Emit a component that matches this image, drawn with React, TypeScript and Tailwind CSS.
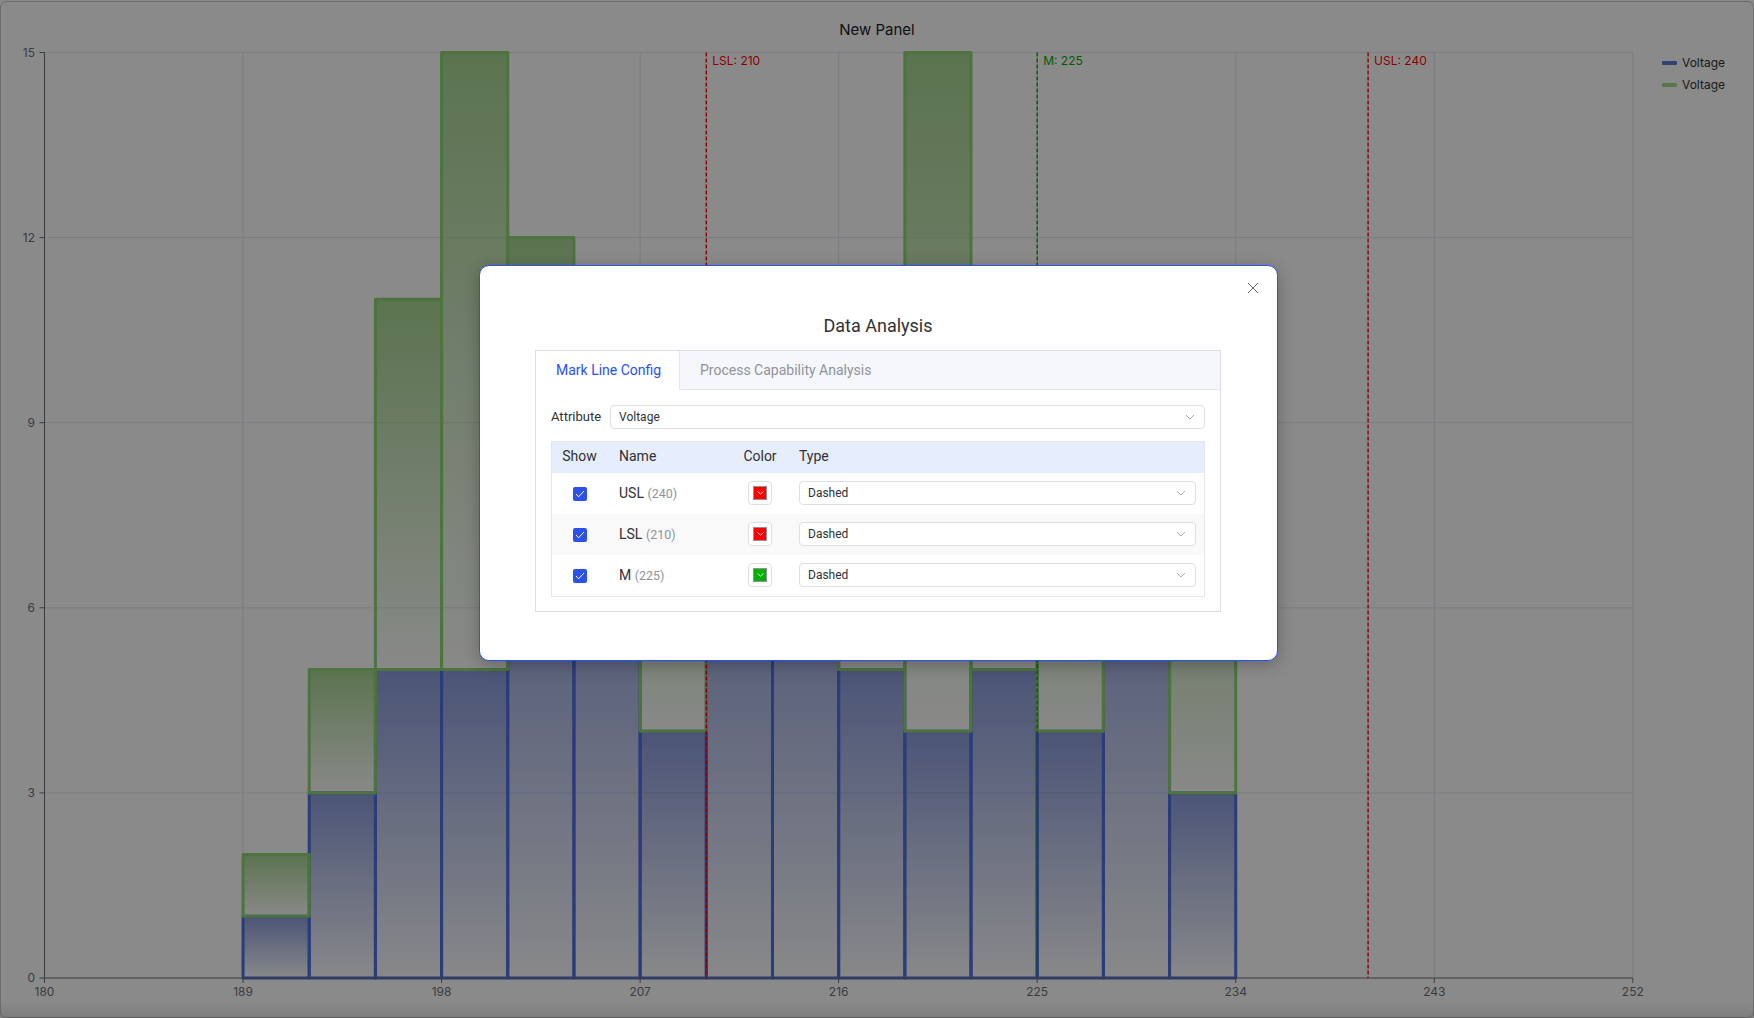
const X0 = 44.5
const XPER = 22.06
const Y0 = 978
const YPER = 61.7
const xAt = (v: number) => X0 + (v - 180) * XPER
const yAt = (v: number) => Y0 - v * YPER

// [blue, stacked total] per 3-wide bin starting at 189
const bins = [
  [1, 2], [3, 5], [5, 11], [5, 15], [7, 12], [7, 9], [4, 8], [7, 9],
  [7, 9], [5, 8], [4, 15], [5, 8], [4, 8], [7, 9], [3, 8],
]

const marks = [
  { v: 210, label: 'LSL: 210', color: '#ff0000' },
  { v: 225, label: 'M: 225', color: '#00aa00' },
  { v: 240, label: 'USL: 240', color: '#ff0000' },
]

function Chart() {
  return (
    <svg width="1754" height="1018" className="block" style={{ fontFamily: 'Inter, sans-serif' }}>
      <defs>
        <linearGradient id="blueFill" x1="0" y1="0" x2="0" y2="1">
          <stop offset="0%" stopColor="#556ecb" stopOpacity="0.68" />
          <stop offset="100%" stopColor="#556ecb" stopOpacity="0.02" />
        </linearGradient>
        <linearGradient id="greenFill" x1="0" y1="0" x2="0" y2="1">
          <stop offset="0%" stopColor="#87c669" stopOpacity="0.72" />
          <stop offset="100%" stopColor="#87c669" stopOpacity="0.02" />
        </linearGradient>
      </defs>

      <text x="877" y="35" textAnchor="middle" fontSize="15" fill="#222">New Panel</text>

      {[3, 6, 9, 12, 15].map(v => (
        <line key={v} x1={X0} x2={xAt(252)} y1={yAt(v)} y2={yAt(v)} stroke="#e0e6f1" />
      ))}
      {[189, 198, 207, 216, 225, 234, 243, 252].map(v => (
        <line key={v} x1={xAt(v)} x2={xAt(v)} y1={yAt(15)} y2={Y0} stroke="#e0e6f1" />
      ))}

      {bins.map(([blue], i) => (
        <rect key={i} x={xAt(189 + i * 3)} y={yAt(blue)} width={3 * XPER} height={blue * YPER}
          fill="url(#blueFill)" stroke="#506fe2" strokeWidth="3" strokeLinejoin="round" />
      ))}
      {bins.map(([blue, total], i) => (
        <rect key={i} x={xAt(189 + i * 3)} y={yAt(total)} width={3 * XPER} height={(total - blue) * YPER}
          fill="url(#greenFill)" stroke="#8fd474" strokeWidth="3" strokeLinejoin="round" />
      ))}

      {marks.map(m => (
        <g key={m.v}>
          <line x1={xAt(m.v)} x2={xAt(m.v)} y1={yAt(15)} y2={Y0} stroke={m.color} strokeWidth="1.4" strokeDasharray="4 2" />
          <text x={xAt(m.v) + 6} y={65} fontSize="12" fill={m.color}>{m.label}</text>
        </g>
      ))}

      <line x1={X0} x2={X0} y1={yAt(15)} y2={Y0} stroke="#6e7079" />
      <line x1={X0} x2={xAt(252)} y1={Y0} y2={Y0} stroke="#6e7079" />
      {[0, 3, 6, 9, 12, 15].map(v => (
        <g key={v}>
          <line x1={X0 - 5} x2={X0} y1={yAt(v)} y2={yAt(v)} stroke="#6e7079" />
          <text x={35} y={yAt(v) + 4} textAnchor="end" fontSize="12" fill="#6e7079">{v}</text>
        </g>
      ))}
      {[180, 189, 198, 207, 216, 225, 234, 243, 252].map(v => (
        <g key={v}>
          <line x1={xAt(v)} x2={xAt(v)} y1={Y0} y2={Y0 + 5} stroke="#6e7079" />
          <text x={xAt(v)} y={996} textAnchor="middle" fontSize="12" fill="#6e7079">{v}</text>
        </g>
      ))}

      <rect x="1662" y="61" width="15" height="4" rx="1" fill="#5f7bd6" />
      <text x="1682" y="67" fontSize="12" fill="#333">Voltage</text>
      <rect x="1662" y="83" width="15" height="4" rx="1" fill="#a2df88" />
      <text x="1682" y="89" fontSize="12" fill="#333">Voltage</text>
    </svg>
  )
}

function Chevron() {
  return (
    <svg width="10" height="6" viewBox="0 0 10 6" fill="none" stroke="#a8abb2" strokeWidth="1">
      <path d="M1 1l4 4 4-4" />
    </svg>
  )
}

function Select({ value }: { value: string }) {
  return (
    <div className="flex h-6 items-center justify-between rounded border border-[#dcdfe6] bg-white pl-2 pr-[9px] text-xs text-[#303133]">
      <span>{value}</span>
      <Chevron />
    </div>
  )
}

function Row({ name, val, color, striped }: { name: string; val: number; color: string; striped?: boolean }) {
  return (
    <div className={`grid h-[41px] grid-cols-[55px_125px_56px_1fr] items-center ${striped ? 'bg-[#f9f9f9]' : 'bg-white'}`}>
      <div className="flex justify-center">
        <span className="flex h-3.5 w-3.5 items-center justify-center rounded-[2px] bg-[#2b50ed]">
          <svg width="10" height="8" viewBox="0 0 10 8" fill="none" stroke="#fff" strokeWidth="1">
            <path d="M1 4l2.6 2.8L9 1" />
          </svg>
        </span>
      </div>
      <div className="-mt-px pl-3 text-sm text-[#303133]">
        {name} <span className="text-[12.5px] text-[#909399]">({val})</span>
      </div>
      <div className="-mt-px flex justify-center">
        <span className="flex h-6 w-6 items-center justify-center rounded border border-[#dcdfe6] bg-white">
          <span className="flex h-3.5 w-3.5 items-center justify-center border border-[#909399]" style={{ backgroundColor: color }}>
            <svg width="7" height="4" viewBox="0 0 7 4" fill="none" stroke="#fff" strokeWidth="0.8">
              <path d="M.5.5l3 2.6 3-2.6" />
            </svg>
          </span>
        </span>
      </div>
      <div className="-mt-px pl-[11px] pr-2">
        <Select value="Dashed" />
      </div>
    </div>
  )
}

export default function App() {
  return (
    <div className="relative h-[1018px] w-full overflow-hidden bg-white" style={{ fontFamily: 'Roboto, sans-serif' }}>
      <Chart />
      {/* panel frame + bottom shade of the page behind the mask */}
      <div className="pointer-events-none absolute inset-x-0 bottom-0 top-px rounded-md border border-[#c8c8c8]" />
      <div className="pointer-events-none absolute inset-x-0 bottom-0 h-4 bg-gradient-to-b from-transparent to-black/10" />
      <div className="absolute inset-0 flex justify-center bg-black/[.46] pl-0.5 pt-[265px]">
        <div className="relative h-[396px] w-[799px] rounded-[10px] border border-[#2b50ed] bg-white shadow-[0_4px_16px_rgba(0,0,0,0.25)]">
          <button className="absolute right-[18px] top-4 text-[#666]">
            <svg width="12" height="12" viewBox="0 0 12 12" fill="none" stroke="currentColor" strokeWidth="1" className="block">
              <path d="M1 1l10 10M11 1L1 11" />
            </svg>
          </button>
          <h2 className="pt-[46px] text-center text-lg leading-7 text-[#303133]">Data Analysis</h2>
          <div className="mx-[55.5px] mt-2.5 h-[262px] border border-[#dcdfe6]">
            <div className="flex h-[39px] border-b border-[#e4e7ed] bg-[#f5f7fa] text-sm">
              <div className="-mb-px flex w-[144px] items-center border-r border-[#e4e7ed] bg-white pb-px pl-5 text-[#2b50ed]">Mark Line Config</div>
              <div className="flex items-center pl-5 text-[#909399]">Process Capability Analysis</div>
            </div>
            <div className="px-[15px] pt-[15px]">
              <div className="flex items-center gap-[9px]">
                <span className="text-[13px] text-[#303133]">Attribute</span>
                <div className="flex-1"><Select value="Voltage" /></div>
              </div>
              <div className="mt-3 border border-[#e4e7ed]">
                <div className="grid h-[31px] grid-cols-[55px_125px_56px_1fr] items-center bg-[#e6edfc] pb-[3px] text-sm text-[#303133]">
                  <div className="text-center">Show</div>
                  <div className="pl-3">Name</div>
                  <div className="text-center">Color</div>
                  <div className="pl-[11px]">Type</div>
                </div>
                <Row name="USL" val={240} color="#ff0000" />
                <Row name="LSL" val={210} color="#ff0000" striped />
                <Row name="M" val={225} color="#00b000" />
              </div>
            </div>
          </div>
        </div>
      </div>
    </div>
  )
}
